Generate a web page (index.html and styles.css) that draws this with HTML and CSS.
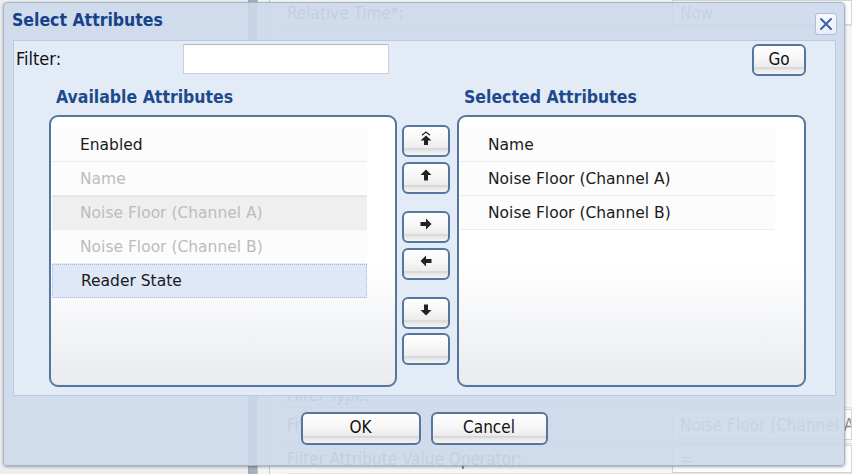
FILE: index.html
```html
<!DOCTYPE html>
<html>
<head>
<meta charset="utf-8">
<link rel="stylesheet" href="styles.css">
</head>
<body>
<div class="page">
  <div class="nav"></div>
  <div class="splitter"></div>
  <div class="gutter"></div>
  <div class="form">
    <div class="frow frow-top"><span class="flabel">Relative Time<span class="req">*</span>:</span><span class="finput">Now</span></div>
    <div class="fspacer"></div>
    <div class="frow frow-type"><span class="flabel">Filter Type:</span></div>
    <div class="frow frow-attr"><span class="flabel">Filter Attribute:</span><span class="finput">Noise Floor (Channel A)</span></div>
    <div class="frow frow-op"><span class="flabel">Filter Attribute Value Operator:</span><span class="finput">=</span></div>
  </div>
</div>

<div class="dialog">
  <div class="titlebar">
    <span class="title">Select Attributes</span>
    <span class="close"><svg width="14" height="14" viewBox="0 0 14 14"><path d="M2 2 L12 12 M12 2 L2 12" stroke="#3c62a3" stroke-width="2" stroke-linecap="round" fill="none"/></svg></span>
  </div>
  <div class="panel">
    <div class="filter-row">
      <span class="filter-label">Filter:</span>
      <span class="filter-input"></span>
      <span class="btn go">Go</span>
    </div>
    <div class="lists">
      <div class="listcol">
        <div class="list-head">Available Attributes</div>
        <div class="listbox">
          <div class="item">Enabled</div>
          <div class="item disabled">Name</div>
          <div class="item disabled greyed">Noise Floor (Channel A)</div>
          <div class="item disabled">Noise Floor (Channel B)</div>
          <div class="item selected">Reader State</div>
        </div>
      </div>
      <div class="movecol">
        <span class="btn move"><svg width="14" height="15" viewBox="0 0 14 15"><path d="M3 4.2 L7 1 L11 4.2" stroke="#222" stroke-width="1.2" fill="none"/><path d="M7 4.5 L12.5 9.5 H9 V14 H5 V9.5 H1.5 Z" fill="#222"/></svg></span>
        <span class="btn move m5"><svg width="14" height="14" viewBox="0 0 14 14"><path d="M7 1.5 L12.5 7 H9 V12.5 H5 V7 H1.5 Z" fill="#222"/></svg></span>
        <span class="btn move m17"><svg width="14" height="14" viewBox="0 0 14 14"><path d="M12.5 7 L7 1.5 V5 H1.5 V9 H7 V12.5 Z" fill="#222"/></svg></span>
        <span class="btn move m5"><svg width="14" height="14" viewBox="0 0 14 14"><path d="M1.5 7 L7 1.5 V5 H12.5 V9 H7 V12.5 Z" fill="#222"/></svg></span>
        <span class="btn move m17"><svg width="14" height="14" viewBox="0 0 14 14"><path d="M7 12.5 L12.5 7 H9 V1.5 H5 V7 H1.5 Z" fill="#222"/></svg></span>
        <span class="btn move m4"></span>
      </div>
      <div class="listcol">
        <div class="list-head">Selected Attributes</div>
        <div class="listbox">
          <div class="item">Name</div>
          <div class="item">Noise Floor (Channel A)</div>
          <div class="item">Noise Floor (Channel B)</div>
        </div>
      </div>
    </div>
  </div>
  <div class="footer">
    <span class="btn wide ok">OK</span>
    <span class="btn wide cancel">Cancel</span>
  </div>
</div>
</body>
</html>
```

FILE: styles.css
```css
* { box-sizing: border-box; }
html, body { margin: 0; padding: 0; }
body {
  width: 852px;
  height: 474px;
  overflow: hidden;
  position: relative;
  background: #f3f3f3;
  font-family: "DejaVu Sans Condensed", "DejaVu Sans", sans-serif;
  font-stretch: condensed;
}

/* background page */
.page {
  display: flex;
  height: 474px;
}
.nav { width: 248px; flex: none; background: #eeeeee; }
.splitter {
  width: 10px;
  flex: none;
  background: #a7b0bc;
  border-left: 1px solid #9aa3b0;
  border-right: 1px solid #c0c7d0;
}
.gutter { width: 12px; flex: none; background: #f4f4f4; border-right: 1px solid #c9c9c9; }
.form {
  flex: 1;
  min-width: 0;
  display: flex;
  flex-direction: column;
  padding-left: 17px;
  background: #f5f5f5;
}
.frow {
  display: flex;
  align-items: center;
  font-size: 17px;
  color: #6a6a6a;
  border-bottom: 1px solid #e2e2e2;
}
.flabel { width: 385px; flex: none; }
.req { color: #d22; }
.finput {
  flex: 1;
  min-width: 0;
  align-self: stretch;
  background: #fdfdfd;
  border: 1px solid #d4d4d4;
  padding-left: 7px;
  display: flex;
  align-items: center;
  color: #8a8a8a;
  white-space: nowrap;
  overflow: hidden;
}
.frow-top { height: 26px; }
.fspacer { flex: 1; }
.frow-type { height: 26px; }
.frow-attr { height: 36px; padding: 1px 0 3px; }
.frow-op { height: 30px; padding-top: 1px; }

/* dialog */
.dialog {
  position: absolute;
  left: 3px;
  top: 2px;
  width: 842px;
  height: 464px;
  border: 1px solid #a3b5cb;
  border-radius: 4px;
  background: rgba(204, 217, 235, 0.9);
  box-shadow: 0 1px 3px rgba(0, 0, 0, 0.35);
  display: flex;
  flex-direction: column;
}
.titlebar {
  height: 37px;
  flex: none;
  display: flex;
  align-items: center;
  justify-content: space-between;
  padding: 0 7px 0 8px;
}
.title {
  font-weight: bold;
  font-size: 17.5px;
  color: #15428b;
  margin-top: -3px;
}
.close {
  width: 22px;
  height: 22px;
  border: 1px solid #a9bfdc;
  border-radius: 3px;
  background: linear-gradient(#f7faff, #e6eef9);
  display: flex;
  align-items: center;
  justify-content: center;
  margin-top: 5px;
}
.panel {
  height: 356px;
  flex: none;
  margin: 0 8px 0 9px;
  background: #e3ebf6;
  border: 1px solid #b7cbe5;
  padding: 3px 29px 0 2px;
}
.filter-row {
  display: flex;
  align-items: flex-start;
  height: 32px;
}
.filter-label {
  width: 167px;
  flex: none;
  font-size: 18px;
  color: #111;
  line-height: 30px;
}
.filter-input {
  width: 206px;
  height: 30px;
  background: #fff;
  border: 1px solid #c9cdd4;
  border-top-color: #b4b8c0;
}
.btn {
  display: flex;
  align-items: center;
  justify-content: center;
  border: 2px solid #55769e;
  border-radius: 6px;
  background: linear-gradient(#ffffff 0%, #f6f6f6 45%, #ececec 74%, #d2d2d2 78%, #e6e6e6 84%, #f5f5f5 100%);
  color: #111;
  font-size: 17px;
  padding-bottom: 3px;
}
.go {
  margin-left: auto;
  width: 54px;
  height: 32px;
}
.lists {
  display: flex;
  margin-left: 33px;
}
.listcol {
  display: flex;
  flex-direction: column;
  width: 348px;
}
.listcol + .movecol + .listcol { width: 349px; }
.list-head {
  height: 39px;
  padding: 3px 0 0 7px;
  display: flex;
  align-items: center;
  font-weight: bold;
  font-size: 17.5px;
  color: #1c4a8c;
}
.listbox {
  height: 272px;
  border: 2px solid #55769e;
  border-radius: 9px;
  background: linear-gradient(#ffffff 0%, #ffffff 55%, #e9ebee 100%);
  padding: 11px 0 0 1px;
}
.item {
  width: 315px;
  height: 34px;
  border-bottom: 1px solid #ececec;
  background: #fcfcfc;
  padding-left: 28px;
  display: flex;
  align-items: center;
  font-family: "DejaVu Sans", sans-serif;
  font-stretch: normal;
  font-size: 15.5px;
  color: #1a1a1a;
}
.item.disabled { color: #bcbcbc; }
.item.greyed { background: #efefef; border-top: 1px solid #e2e2e2; }
.item.selected {
  background: #dfe8f6;
  border: 1px dotted #a3b7d9;
}
.movecol {
  width: 48px;
  flex: none;
  margin: 0 7px 0 5px;
  padding-top: 49px;
  display: flex;
  flex-direction: column;
}
.move {
  width: 48px;
  height: 32px;
  padding-bottom: 6px;
}
.m5 { margin-top: 5px; }
.m17 { margin-top: 17px; }
.m4 { margin-top: 4px; }
.footer {
  flex: 1;
  display: flex;
  justify-content: center;
  gap: 10px;
  padding-top: 16px;
}
.wide { height: 33px; }
.ok { width: 120px; }
.cancel { width: 117px; }
```
